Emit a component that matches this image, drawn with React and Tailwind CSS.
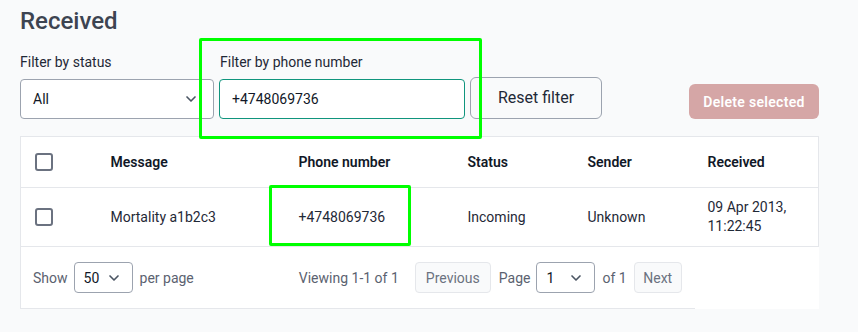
import React from 'react';
import { ChevronDown } from 'lucide-react';

const Checkbox = () => (
  <div className="w-[18px] h-[18px] border-2 border-[#6b7280] rounded-[3px] bg-white"></div>
);

const SelectBox = ({ value, className }) => (
  <div className={`flex items-center justify-between bg-white border border-[#9ca3af] rounded text-[#111827] ${className}`}>
    <span>{value}</span>
    <ChevronDown className="w-4 h-4 text-[#4b5563]" strokeWidth={2.5} />
  </div>
);

const App = () => {
  return (
    <div className="relative w-full h-[332px] bg-[#f9fafb] px-5 pt-[5px] font-['Roboto',sans-serif] overflow-hidden">
      <h1 className="text-[24px] leading-8 font-medium text-[#3d4451]">Received</h1>

      {/* Filters */}
      <div className="flex items-end mt-[15px] w-[799px]">
        <div className="flex flex-col">
          <label className="text-sm leading-5 text-[#1f2937] mb-[7px]">Filter by status</label>
          <SelectBox value="All" className="w-[194px] h-[40px] pl-3 pr-[14px] text-sm" />
        </div>
        <div className="flex flex-col ml-[5px]">
          <label className="text-sm leading-5 text-[#1f2937] mb-[7px] pl-px">Filter by phone number</label>
          <div className="w-[246px] h-[40px] border border-[#10957d] rounded bg-white pl-3 flex items-center text-sm text-[#111827]">
            +4748069736
          </div>
        </div>
        <button className="ml-[5px] w-[132px] h-[42px] border border-[#9ca3af] rounded-md bg-[#f9fafb] text-base text-[#1f2937]">
          Reset filter
        </button>
        <button className="ml-auto w-[130px] h-[35px] rounded-md bg-[#d5a6a6] text-white text-sm font-semibold tracking-[0.3px]">
          Delete selected
        </button>
      </div>

      {/* Table */}
      <div className="mt-[17px] w-[799px] bg-white">
        <table className="w-full table-fixed border-collapse border border-[#e5e7eb] text-sm text-left">
          <colgroup>
            <col className="w-[74px]" />
            <col className="w-[188px]" />
            <col className="w-[169px]" />
            <col className="w-[120px]" />
            <col className="w-[120px]" />
            <col />
          </colgroup>
          <thead>
            <tr className="h-[51px] border-b border-[#e5e7eb]">
              <th className="pl-[14px]"><Checkbox /></th>
              <th className="px-4 font-semibold text-[#111827]">Message</th>
              <th className="px-4 font-semibold text-[#111827]">Phone number</th>
              <th className="px-4 font-semibold text-[#111827]">Status</th>
              <th className="px-4 font-semibold text-[#111827]">Sender</th>
              <th className="px-4 font-semibold text-[#111827]">Received</th>
            </tr>
          </thead>
          <tbody>
            <tr className="h-[59px] text-[#1f2937]">
              <td className="pl-[14px]"><Checkbox /></td>
              <td className="px-4">Mortality a1b2c3</td>
              <td className="px-4">+4748069736</td>
              <td className="px-4">Incoming</td>
              <td className="px-4">Unknown</td>
              <td className="px-4 leading-[19px]">09 Apr 2013,<br />11:22:45</td>
            </tr>
          </tbody>
        </table>

        {/* Footer */}
        <div className="w-fit h-[62px] border-l border-b border-[#e5e7eb] flex items-center pl-3 pr-[13px] text-sm text-[#5b6270]">
          <span>Show</span>
          <SelectBox value="50" className="ml-[6px] w-[59px] h-[31px] pl-[9px] pr-[10px] text-sm" />
          <span className="ml-[7px]">per page</span>
          <span className="ml-[105px]">Viewing 1-1 of 1</span>
          <button className="ml-[16px] w-[76px] h-[31px] border border-[#e5e7eb] rounded bg-[#f9fafb] text-[#6b7280]">Previous</button>
          <span className="ml-2">Page</span>
          <SelectBox value="1" className="ml-[6px] w-[59px] h-[31px] pl-[9px] pr-[10px] text-sm" />
          <span className="ml-[7px]">of 1</span>
          <button className="ml-[7px] w-[48px] h-[31px] border border-[#e5e7eb] rounded bg-[#f9fafb] text-[#6b7280]">Next</button>
        </div>
      </div>

      {/* highlight overlays */}
      <div className="absolute left-[199px] top-[38px] w-[283px] h-[101px] border-[3px] border-[#00ff00] rounded-[2px] pointer-events-none"></div>
      <div className="absolute left-[269px] top-[185px] w-[142px] h-[61px] border-[3px] border-[#00ff00] rounded-[2px] pointer-events-none"></div>
    </div>
  );
};

export default App;
